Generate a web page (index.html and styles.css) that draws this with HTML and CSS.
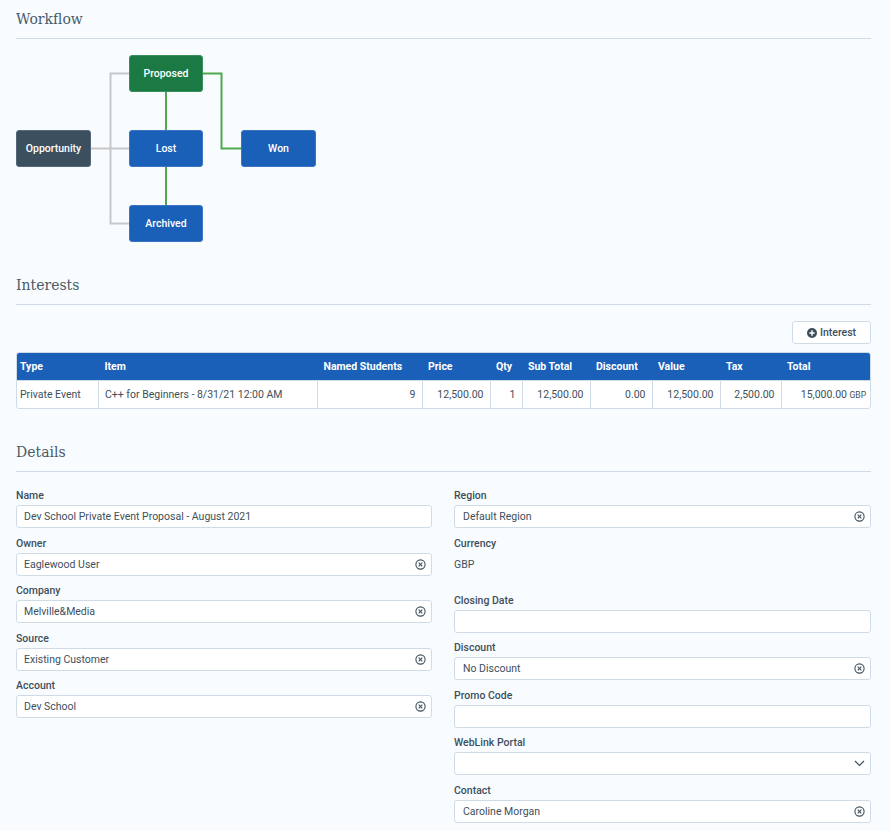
FILE: index.html

```html
<!DOCTYPE html>
<html lang="en">
<head>
  <meta charset="UTF-8" />
  <meta name="viewport" content="width=device-width, initial-scale=1.0"/>
  <title>Opportunity</title>
  <link rel="stylesheet" href="styles.css">
</head>
<body>

<h2 class="section-title">Workflow</h2>

<!-- Workflow diagram -->
<div class="workflow">
  <svg class="workflow-lines" width="320" height="204" viewBox="0 0 320 204">
    <g class="line-grey">
      <path d="M75 109.5H113"/>
      <path d="M113 34.5H94.5V184.5H113"/>
    </g>
    <g class="line-green">
      <path d="M150 53V91"/>
      <path d="M150 128V166"/>
      <path d="M187 34.5H205.5V109.5H225"/>
    </g>
  </svg>
  <div class="node node-dark node-opportunity">Opportunity</div>
  <div class="node node-green node-proposed">Proposed</div>
  <div class="node node-lost">Lost</div>
  <div class="node node-archived">Archived</div>
  <div class="node node-won">Won</div>
</div>

<h2 class="section-title">Interests</h2>

<div class="toolbar">
  <button class="btn">
    <svg width="10" height="10" viewBox="0 0 11 11"><circle cx="5.5" cy="5.5" r="5.5" fill="#3e4f5c"/><path d="M5.5 2.6V8.4M2.6 5.5H8.4" stroke="#fff" stroke-width="1.6"/></svg>
    Interest
  </button>
</div>

<div class="table-wrap">
  <table class="interests">
    <colgroup>
      <col style="width:81.5px"><col style="width:219px"><col style="width:104.5px"><col style="width:68px"><col style="width:32px">
      <col style="width:68px"><col style="width:62px"><col style="width:68px"><col style="width:61px"><col>
    </colgroup>
    <thead>
      <tr>
        <th>Type</th><th>Item</th><th>Named Students</th><th>Price</th><th>Qty</th>
        <th>Sub Total</th><th>Discount</th><th>Value</th><th>Tax</th><th>Total</th>
      </tr>
    </thead>
    <tbody>
      <tr>
        <td>Private Event</td>
        <td>C++ for Beginners - 8/31/21 12:00 AM</td>
        <td class="num">9</td>
        <td class="num">12,500.00</td>
        <td class="num">1</td>
        <td class="num">12,500.00</td>
        <td class="num">0.00</td>
        <td class="num">12,500.00</td>
        <td class="num">2,500.00</td>
        <td class="num">15,000.00 <span class="currency">GBP</span></td>
      </tr>
    </tbody>
  </table>
</div>

<h2 class="section-title details-title">Details</h2>

<div class="details">
  <div class="column">
    <div class="field">
      <label>Name</label>
      <div class="input">Dev School Private Event Proposal - August 2021</div>
    </div>
    <div class="field">
      <label>Owner</label>
      <div class="input">Eaglewood User <svg class="clear" viewBox="0 0 11 11"><circle cx="5.5" cy="5.5" r="4.6"/><path d="M3.7 3.7L7.3 7.3M7.3 3.7L3.7 7.3"/></svg></div>
    </div>
    <div class="field">
      <label>Company</label>
      <div class="input">Melville&amp;Media <svg class="clear" viewBox="0 0 11 11"><circle cx="5.5" cy="5.5" r="4.6"/><path d="M3.7 3.7L7.3 7.3M7.3 3.7L3.7 7.3"/></svg></div>
    </div>
    <div class="field">
      <label>Source</label>
      <div class="input">Existing Customer <svg class="clear" viewBox="0 0 11 11"><circle cx="5.5" cy="5.5" r="4.6"/><path d="M3.7 3.7L7.3 7.3M7.3 3.7L3.7 7.3"/></svg></div>
    </div>
    <div class="field">
      <label>Account</label>
      <div class="input">Dev School <svg class="clear" viewBox="0 0 11 11"><circle cx="5.5" cy="5.5" r="4.6"/><path d="M3.7 3.7L7.3 7.3M7.3 3.7L3.7 7.3"/></svg></div>
    </div>
  </div>

  <div class="column">
    <div class="field">
      <label>Region</label>
      <div class="input">Default Region <svg class="clear" viewBox="0 0 11 11"><circle cx="5.5" cy="5.5" r="4.6"/><path d="M3.7 3.7L7.3 7.3M7.3 3.7L3.7 7.3"/></svg></div>
    </div>
    <div class="field field-static">
      <label>Currency</label>
      <div class="static-value">GBP</div>
    </div>
    <div class="field">
      <label>Closing Date</label>
      <div class="input"></div>
    </div>
    <div class="field">
      <label>Discount</label>
      <div class="input">No Discount <svg class="clear" viewBox="0 0 11 11"><circle cx="5.5" cy="5.5" r="4.6"/><path d="M3.7 3.7L7.3 7.3M7.3 3.7L3.7 7.3"/></svg></div>
    </div>
    <div class="field">
      <label>Promo Code</label>
      <div class="input"></div>
    </div>
    <div class="field">
      <label>WebLink Portal</label>
      <div class="input"><svg class="chevron" viewBox="0 0 11 7"><path d="M1 1L5.5 5.5L10 1"/></svg></div>
    </div>
    <div class="field">
      <label>Contact</label>
      <div class="input">Caroline Morgan <svg class="clear" viewBox="0 0 11 11"><circle cx="5.5" cy="5.5" r="4.6"/><path d="M3.7 3.7L7.3 7.3M7.3 3.7L3.7 7.3"/></svg></div>
    </div>
  </div>
</div>

</body>
</html>
```

FILE: styles.css

```css
* {
  box-sizing: border-box;
}

body {
  font-family: Roboto, Arial, sans-serif;
  font-size: 10.5px;
  color: #3e4f5c;
  margin: 0;
  padding: 0 19px 0 16px;
  background: #f8fcff;
}

.section-title {
  font-family: "DejaVu Serif", serif;
  font-weight: 400;
  font-size: 14px;
  line-height: 24px;
  height: 39px;
  margin: 0;
  padding-top: 7px;
  color: #4a5a66;
  border-bottom: 1px solid #cfdbe6;
}

/* Workflow diagram */
.workflow {
  position: relative;
  height: 227px;
}

.workflow-lines {
  position: absolute;
  top: 0;
  left: 0;
  fill: none;
}

.line-grey {
  stroke: #c6c8ca;
  stroke-width: 2;
}

.line-green {
  stroke: #4ea84f;
  stroke-width: 2;
}

.node {
  position: absolute;
  width: 75px;
  height: 37px;
  display: flex;
  align-items: center;
  justify-content: center;
  font-weight: 500;
  color: #fff;
  background: #1b60b8;
  border: 1px solid #3a74c2;
  border-radius: 3px;
}

.node-dark {
  background: #3c4f5e;
  border-color: #56677a;
}

.node-green {
  background: #1b7a43;
  border-color: #3a8f5e;
}

.node-opportunity { top: 91px; left: 0; }
.node-proposed { top: 16px; left: 113px; width: 74px; }
.node-lost { top: 91px; left: 113px; width: 74px; }
.node-archived { top: 166px; left: 113px; width: 74px; }
.node-won { top: 91px; left: 225px; }

/* Interests */
.toolbar {
  display: flex;
  justify-content: flex-end;
  padding-top: 16px;
  height: 47px;
}

.btn {
  display: flex;
  align-items: center;
  justify-content: center;
  gap: 3px;
  width: 79px;
  height: 23px;
  font-family: inherit;
  font-size: 10.5px;
  font-weight: 500;
  color: #3e4f5c;
  background: #fff;
  border: 1px solid #cfdbe6;
  border-radius: 3px;
}

.table-wrap {
  border: 1px solid #cfdbe6;
  border-radius: 3px;
  overflow: hidden;
  background: #fff;
}

.interests {
  width: 100%;
  table-layout: fixed;
  border-collapse: collapse;
}

.interests th {
  height: 27px;
  padding: 0 6px;
  text-align: left;
  font-weight: 700;
  color: #fff;
  background: #1b60b8;
}

.interests td {
  height: 28px;
  padding: 0 6px;
  white-space: nowrap;
  border-top: 1px solid #cfdbe6;
  border-left: 1px solid #cfdbe6;
}

.interests td:first-child {
  border-left: none;
}

.interests th:first-child,
.interests td:first-child {
  padding-left: 3px;
}

.interests .num {
  text-align: right;
}

.interests td:last-child {
  padding-right: 4px;
}

.currency {
  font-size: 8.5px;
}

/* Details */
.details-title {
  margin-top: 24px;
}

.details {
  display: grid;
  grid-template-columns: 416px 1fr;
  gap: 22px;
  padding-top: 10px;
}

.field {
  height: 47.5px;
}

.field label {
  display: block;
  height: 23px;
  line-height: 28px;
  font-weight: 500;
}

.field-static {
  height: 57px;
}

.static-value {
  padding-top: 5px;
}

.input {
  display: flex;
  align-items: center;
  justify-content: space-between;
  height: 23px;
  padding: 0 5px 0 7px;
  background: #fff;
  border: 1px solid #cfdbe6;
  border-radius: 3px;
}

.column + .column .input {
  padding-left: 8px;
}

.clear {
  width: 11px;
  height: 11px;
  fill: none;
  stroke: #3e4f5c;
  stroke-width: 1.1;
}

.chevron {
  width: 11px;
  height: 7px;
  margin-left: auto;
  fill: none;
  stroke: #3e4f5c;
  stroke-width: 1.2;
}
```
